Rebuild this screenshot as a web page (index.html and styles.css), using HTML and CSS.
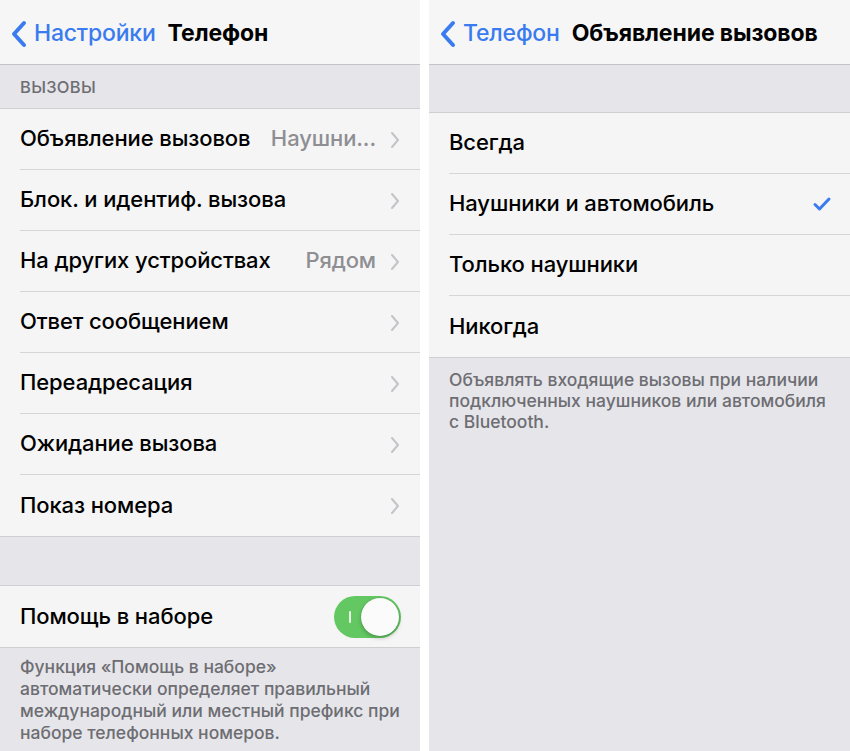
FILE: index.html
```html
<!DOCTYPE html>
<html lang="ru">
<head>
<meta charset="utf-8">
<link rel="stylesheet" href="styles.css">
</head>
<body>
<div class="screens">
  <section class="panel">
    <header class="nav">
      <svg class="back-icon" width="18" height="28" viewBox="0 0 18 28"><path d="M14 3 L4 14 L14 25" fill="none" stroke="#3a7bf0" stroke-width="4" stroke-linecap="round" stroke-linejoin="round"/></svg>
      <span class="back-label">Настройки</span>
      <span class="nav-title">Телефон</span>
    </header>
    <div class="section-header">ВЫЗОВЫ</div>
    <ul class="group">
      <li class="row"><span class="label">Объявление вызовов</span><span class="value">Наушни...</span><svg class="chev" width="10" height="18" viewBox="0 0 10 18"><path d="M2 2 L8 9 L2 16" fill="none" stroke="#c3c3c8" stroke-width="2" stroke-linecap="round" stroke-linejoin="round"/></svg></li>
      <li class="row"><span class="label">Блок. и идентиф. вызова</span><svg class="chev" width="10" height="18" viewBox="0 0 10 18"><path d="M2 2 L8 9 L2 16" fill="none" stroke="#c3c3c8" stroke-width="2" stroke-linecap="round" stroke-linejoin="round"/></svg></li>
      <li class="row"><span class="label">На других устройствах</span><span class="value">Рядом</span><svg class="chev" width="10" height="18" viewBox="0 0 10 18"><path d="M2 2 L8 9 L2 16" fill="none" stroke="#c3c3c8" stroke-width="2" stroke-linecap="round" stroke-linejoin="round"/></svg></li>
      <li class="row"><span class="label">Ответ сообщением</span><svg class="chev" width="10" height="18" viewBox="0 0 10 18"><path d="M2 2 L8 9 L2 16" fill="none" stroke="#c3c3c8" stroke-width="2" stroke-linecap="round" stroke-linejoin="round"/></svg></li>
      <li class="row"><span class="label">Переадресация</span><svg class="chev" width="10" height="18" viewBox="0 0 10 18"><path d="M2 2 L8 9 L2 16" fill="none" stroke="#c3c3c8" stroke-width="2" stroke-linecap="round" stroke-linejoin="round"/></svg></li>
      <li class="row"><span class="label">Ожидание вызова</span><svg class="chev" width="10" height="18" viewBox="0 0 10 18"><path d="M2 2 L8 9 L2 16" fill="none" stroke="#c3c3c8" stroke-width="2" stroke-linecap="round" stroke-linejoin="round"/></svg></li>
      <li class="row"><span class="label">Показ номера</span><svg class="chev" width="10" height="18" viewBox="0 0 10 18"><path d="M2 2 L8 9 L2 16" fill="none" stroke="#c3c3c8" stroke-width="2" stroke-linecap="round" stroke-linejoin="round"/></svg></li>
    </ul>
    <div class="spacer"></div>
    <ul class="group">
      <li class="row"><span class="label">Помощь в наборе</span>
        <span class="toggle"><span class="toggle-mark"></span><span class="knob"></span></span>
      </li>
    </ul>
    <p class="footer">Функция «Помощь в наборе» автоматически определяет правильный международный или местный префикс при наборе телефонных номеров.</p>
  </section>

  <section class="panel">
    <header class="nav">
      <svg class="back-icon" width="18" height="28" viewBox="0 0 18 28"><path d="M14 3 L4 14 L14 25" fill="none" stroke="#3a7bf0" stroke-width="4" stroke-linecap="round" stroke-linejoin="round"/></svg>
      <span class="back-label">Телефон</span>
      <span class="nav-title">Объявление вызовов</span>
    </header>
    <div class="section-gap"></div>
    <ul class="group">
      <li class="row"><span class="label">Всегда</span></li>
      <li class="row"><span class="label">Наушники и автомобиль</span><svg class="check" width="20" height="16" viewBox="0 0 20 16"><path d="M3 8.5 L7.5 13 L17 3" fill="none" stroke="#3a7bf0" stroke-width="3" stroke-linecap="round" stroke-linejoin="round"/></svg></li>
      <li class="row"><span class="label">Только наушники</span></li>
      <li class="row"><span class="label">Никогда</span></li>
    </ul>
    <p class="footer footer-right">Объявлять входящие вызовы при наличии подключенных наушников или автомобиля с Bluetooth.</p>
  </section>
</div>
</body>
</html>
```
FILE: styles.css
```css
* { box-sizing: border-box; }
html, body { margin: 0; padding: 0; background: #ffffff; }
body {
  width: 850px;
  height: 751px;
  overflow: hidden;
  font-family: Inter, "Noto Sans", "DejaVu Sans", sans-serif;
  -webkit-font-smoothing: antialiased;
}
.screens {
  display: flex;
  gap: 9px;
  height: 751px;
}
.panel {
  background: #e5e5ea;
  height: 751px;
  display: flex;
  flex-direction: column;
}
.panel:first-child { width: 420px; }
.panel:last-child { width: 421px; }

.nav {
  height: 65px;
  background: #f6f6f6;
  border-bottom: 1px solid #c4c4c8;
  display: flex;
  align-items: center;
  padding-left: 10px;
  padding-top: 2px;
  flex-shrink: 0;
}
.back-icon { margin-right: 6px; margin-top: 1px; }
.back-label {
  color: #3a7bf0;
  font-size: 23px;
  font-weight: 500;
  letter-spacing: -0.2px;
}
.nav-title {
  margin-left: 12px;
  font-size: 23px;
  font-weight: 700;
  color: #000;
  letter-spacing: -0.1px;
}

.section-header {
  height: 43px;
  padding: 12px 20px 0;
  font-size: 16.5px;
  font-weight: 500;
  color: #6d6d72;
  letter-spacing: 0.3px;
  flex-shrink: 0;
}
.section-gap { height: 47px; flex-shrink: 0; }
.spacer { height: 48px; flex-shrink: 0; }

.group {
  list-style: none;
  margin: 0;
  padding: 0;
  background: #f5f5f5;
  border-top: 1px solid #cfcfd3;
  border-bottom: 1px solid #cfcfd3;
  flex-shrink: 0;
}
.row {
  height: 61px;
  margin-left: 20px;
  padding-right: 20px;
  display: flex;
  align-items: center;
  border-bottom: 1px solid #d6d6da;
  font-size: 22px;
  font-weight: 500;
  color: #000;
}
.row:last-child { border-bottom: none; }
.label { flex: 1; letter-spacing: -0.1px; padding-bottom: 2px; }
.value {
  color: #8e8e93;
  margin-right: 14px;
  letter-spacing: -0.1px;
  padding-bottom: 2px;
}
.chev { margin-top: 1px; }
.check { margin-right: -2px; }

.toggle {
  position: relative;
  width: 67px;
  height: 42px;
  border-radius: 21px;
  background: #63c862;
  margin-right: -1px;
}
.toggle-mark {
  position: absolute;
  left: 15px;
  top: 15px;
  width: 2px;
  height: 12px;
  background: #e8f6e8;
  border-radius: 1px;
}
.knob {
  position: absolute;
  right: 2px;
  top: 2px;
  width: 38px;
  height: 38px;
  border-radius: 50%;
  background: #fbfbfb;
  box-shadow: 0 2px 4px rgba(0,0,0,0.25), 0 0 0 0.5px rgba(0,0,0,0.08);
}

.footer {
  margin: 0;
  padding: 8px 20px 0;
  font-size: 17.5px;
  font-weight: 500;
  line-height: 22px;
  color: #6d6d72;
}
.footer-right {
  padding-top: 11px;
  padding-right: 24px;
  font-size: 17.5px;
  line-height: 21px;
}
```
